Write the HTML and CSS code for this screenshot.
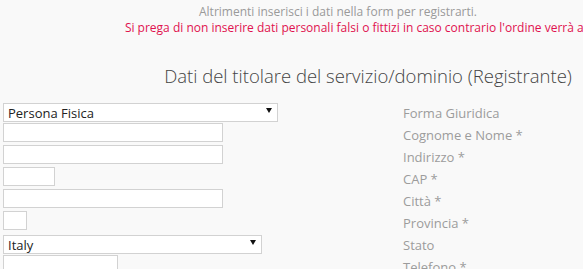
FILE: index.html
```html
<!DOCTYPE html>
<html>
<head>
    <title>Registrazione</title>
    <link rel="stylesheet" href="styles.css">
</head>
<body>
    <div class="page">
        <div class="notice">
            <div class="notice-info">Altrimenti inserisci i dati nella form per registrarti.</div>
            <div class="notice-warn">Si prega di non inserire dati personali falsi o fittizi in caso contrario l'ordine verrà annullato.</div>
        </div>

        <h2 class="section-title">Dati del titolare del servizio/dominio (Registrante)</h2>

        <form class="reg-form">
            <div class="field">
                <div class="select-wrap w-forma">
                    <select class="ctrl">
                        <option>Persona Fisica</option>
                        <option>Società</option>
                    </select>
                </div>
            </div>
            <label class="field-label">Forma Giuridica</label>

            <div class="field"><input class="ctrl w-long" type="text"></div>
            <label class="field-label">Cognome e Nome *</label>

            <div class="field"><input class="ctrl w-long" type="text"></div>
            <label class="field-label">Indirizzo *</label>

            <div class="field"><input class="ctrl w-cap" type="text"></div>
            <label class="field-label">CAP *</label>

            <div class="field"><input class="ctrl w-long" type="text"></div>
            <label class="field-label">Città *</label>

            <div class="field"><input class="ctrl w-prov" type="text"></div>
            <label class="field-label">Provincia *</label>

            <div class="field">
                <div class="select-wrap w-stato">
                    <select class="ctrl">
                        <option>Italy</option>
                    </select>
                </div>
            </div>
            <label class="field-label">Stato</label>

            <div class="field"><input class="ctrl w-tel" type="text"></div>
            <label class="field-label">Telefono *</label>
        </form>
    </div>
</body>
</html>
```

FILE: styles.css
```css
body {
    margin: 0;
    background-color: #f9f9f9;
    font-family: 'Open Sans', sans-serif;
    overflow: hidden;
}

.page {
    width: 736px;
}

.notice {
    text-align: center;
    padding-top: 4px;
    font-size: 12px;
    line-height: 16px;
    white-space: nowrap;
}

.notice-info {
    color: #9a9a9a;
    padding-right: 60px;
}

.notice-warn {
    color: #e0124f;
    padding-left: 22px;
}

.section-title {
    margin: 27px 0 0 0;
    font-size: 18.5px;
    font-weight: 300;
    line-height: 26px;
    color: #444444;
    text-align: center;
}

.reg-form {
    display: grid;
    grid-template-columns: 400px 1fr;
    grid-auto-rows: 22px;
    margin-top: 12px;
    padding-left: 3px;
}

.field {
    display: flex;
    align-items: flex-start;
}

.field-label {
    padding-top: 3px;
    font-size: 13px;
    line-height: 19px;
    color: #9c9c9c;
}

.ctrl {
    box-sizing: border-box;
    height: 19px;
    margin: 0;
    padding: 0 4px;
    border: 1px solid #d2d2d2;
    border-radius: 0;
    background: #ffffff;
    font-family: 'Open Sans', sans-serif;
    font-size: 13px;
    color: #222222;
    outline: none;
}

.select-wrap {
    position: relative;
}

.select-wrap .ctrl {
    width: 100%;
    appearance: none;
    -webkit-appearance: none;
}

.select-wrap::after {
    content: "";
    position: absolute;
    right: 6px;
    top: 7px;
    border-left: 3px solid transparent;
    border-right: 3px solid transparent;
    border-top: 5px solid #111111;
}

.w-forma { width: 275px; }
.w-stato { width: 259px; }
.w-long { width: 220px; }
.w-cap { width: 52px; }
.w-prov { width: 24px; }
.w-tel { width: 115px; }
```
